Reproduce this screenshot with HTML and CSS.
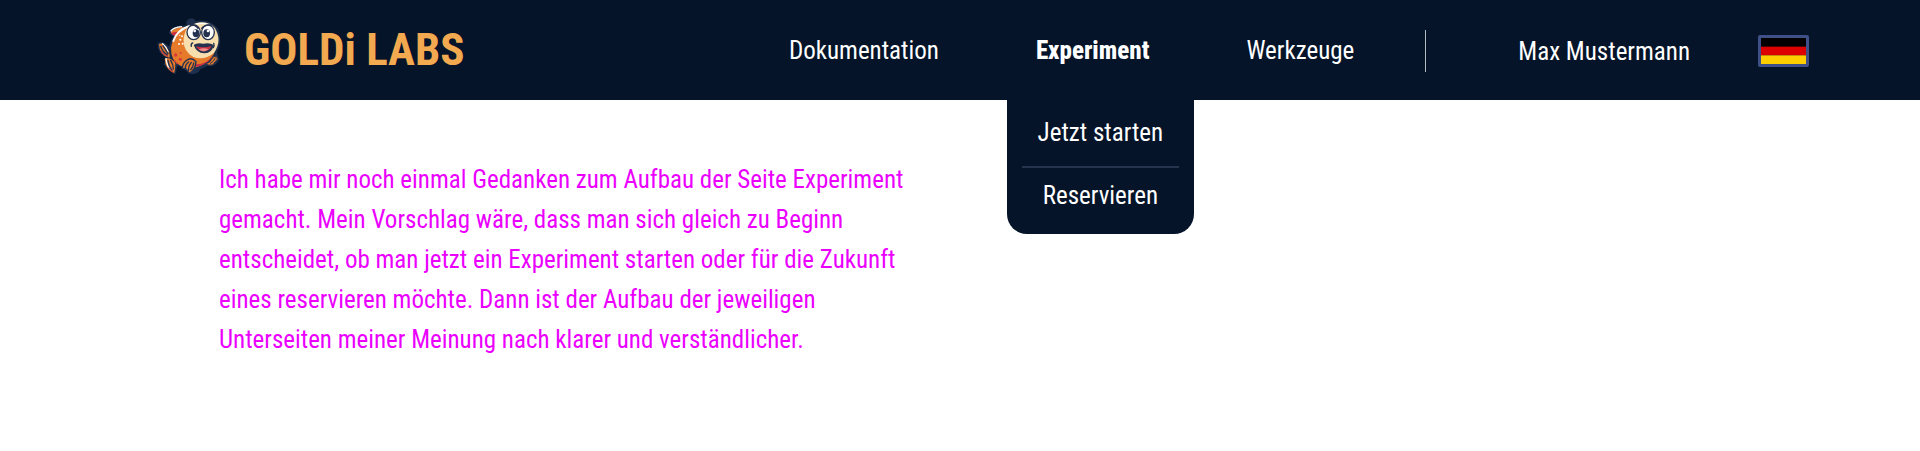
FILE: index.html
```html
<!DOCTYPE html>
<html lang="de">
<head>
<meta charset="utf-8">
<meta name="viewport" content="width=device-width, initial-scale=1">
<title>GOLDi LABS</title>
<link rel="stylesheet" href="styles.css">
</head>
<body>
<header class="header">
  <a class="brand" href="#">
    <svg class="brand-logo" viewBox="18 18 192 171" aria-hidden="true">
      <path fill="#1d2f4c" stroke="#1d2f4c" stroke-width="6" stroke-linejoin="round" d="M112 32Q118 22 130 26L136 34Q178 24 202 56Q214 92 198 124L204 146Q194 166 176 160L150 172Q138 192 118 184L96 166L80 160L74 186L44 160L58 140Q24 128 26 98Q38 90 60 114Q60 94 74 76L60 66Q68 46 112 46Z"/>
      <path fill="#e67a2b" d="M62 64Q70 50 102 48L92 62L80 74Q68 74 62 64Z"/>
      <path fill="#c72f45" d="M63 66Q74 62 90 64L80 75Q68 75 63 66Z"/>
      <path fill="none" stroke="#fff" stroke-width="4" d="M62 61Q70 49 96 47"/>
      <path fill="#e67a2b" d="M27 99Q40 92 54 116Q62 132 58 140Q28 134 27 99Z"/>
      <path fill="#e67a2b" d="M44 144Q60 136 76 156Q76 176 72 186Q46 176 44 144Z"/>
      <path fill="none" stroke="#fff" stroke-width="4" stroke-linecap="round" d="M38 98Q50 108 54 122M48 142Q50 162 60 174"/>
      <path fill="none" stroke="#24324f" stroke-width="4" stroke-linecap="round" d="M32 106Q38 124 52 132M39 104Q46 116 54 128M54 148Q56 166 66 178M62 148Q70 160 70 174"/>
      <path fill="none" stroke="#c72f45" stroke-width="3" d="M32 118Q40 132 54 136M56 170Q62 180 70 184"/>
      <path fill="#e67a2b" d="M128 42Q74 48 63 110Q62 152 92 164Q132 182 176 150L192 128Z"/>
      <path fill="#c72f45" d="M134 168Q176 164 192 130Q172 160 138 160Z"/>
      <path fill="none" stroke="#fff" stroke-width="6" stroke-linecap="round" d="M118 45Q80 58 70 90"/>
      <path fill="#f9dfae" d="M118 46Q160 20 194 50Q218 88 192 126Q162 150 130 138Q98 120 101 82Q104 56 118 46Z"/>
      <path fill="none" stroke="#fff" stroke-width="4" d="M138 39Q160 34 180 42"/>
      <g fill="#fff" stroke="#24324f" stroke-width="4">
        <ellipse cx="131" cy="64" rx="20" ry="22"/>
        <ellipse cx="174" cy="64" rx="19" ry="22"/>
      </g>
      <g fill="#24324f">
        <ellipse cx="138" cy="67" rx="10" ry="12"/>
        <ellipse cx="170" cy="67" rx="10" ry="12"/>
      </g>
      <g fill="#fff">
        <circle cx="134" cy="60" r="4"/>
        <circle cx="174" cy="60" r="4"/>
        <circle cx="91" cy="86" r="3"/>
        <circle cx="98" cy="98" r="3"/>
        <circle cx="87" cy="99" r="3"/>
        <circle cx="96" cy="76" r="3"/>
        <circle cx="89" cy="73" r="2"/>
      </g>
      <path fill="none" stroke="#24324f" stroke-width="4" stroke-linecap="round" d="M117 41Q134 38 144 52M155 52Q164 40 186 42M128 96Q122 98 124 106M191 97Q194 104 190 110"/>
      <path fill="#24324f" d="M131 102Q140 94 160 98Q180 94 191 102Q186 128 162 127Q140 126 131 102Z"/>
      <path fill="#c72f45" d="M138 106Q160 112 184 105Q180 120 162 121Q144 120 138 106Z"/>
      <path fill="#ef8b87" d="M146 116Q160 108 176 115Q168 122 158 121Z"/>
      <g fill="#d93a3e">
        <circle cx="91" cy="145" r="5"/>
        <circle cx="77" cy="132" r="5"/>
        <circle cx="92" cy="126" r="3"/>
        <circle cx="74" cy="150" r="3"/>
        <circle cx="82" cy="157" r="3"/>
      </g>
      <path fill="#e67a2b" stroke="#24324f" stroke-width="4" stroke-linejoin="round" d="M113 146Q98 154 97 172L108 174L118 186Q136 178 138 152Q126 138 113 146Z"/>
      <path fill="none" stroke="#24324f" stroke-width="4" stroke-linecap="round" d="M116 153Q106 160 106 172M124 154Q114 166 116 178M131 156Q130 168 122 176"/>
      <path fill="#e67a2b" stroke="#24324f" stroke-width="3" d="M184 146Q190 132 200 136Q206 146 196 152L188 162Q174 164 166 158Q180 156 184 146Z"/>
      <path fill="none" stroke="#24324f" stroke-width="3" d="M196 140Q192 152 180 158"/>
    </svg>
    <span class="brand-name">GOLDi LABS</span>
  </a>
  <nav class="nav" aria-label="Hauptnavigation">
    <a class="nav-link" href="#">Dokumentation</a>
    <div class="nav-group">
      <a class="nav-link nav-link-active" href="#" aria-current="page">Experiment</a>
      <div class="submenu">
        <a class="submenu-link" href="#">Jetzt starten</a>
        <a class="submenu-link" href="#">Reservieren</a>
      </div>
    </div>
    <a class="nav-link" href="#">Werkzeuge</a>
  </nav>
  <div class="account">
    <a class="nav-link" href="#">Max Mustermann</a>
    <button class="language" type="button" aria-label="Deutsch">
      <svg class="flag" viewBox="0 0 45 27" preserveAspectRatio="none" aria-hidden="true">
        <rect width="45" height="9" fill="#000"/>
        <rect y="9" width="45" height="9" fill="#d00"/>
        <rect y="18" width="45" height="9" fill="#ffce00"/>
      </svg>
    </button>
  </div>
</header>
<main class="content">
  <p class="note">Ich habe mir noch einmal Gedanken zum Aufbau der Seite Experiment gemacht. Mein Vorschlag wäre, dass man sich gleich zu Beginn entscheidet, ob man jetzt ein Experiment starten oder für die Zukunft eines reservieren möchte. Dann ist der Aufbau der jeweiligen Unterseiten meiner Meinung nach klarer und verständlicher.</p>
</main>
</body>
</html>
```
FILE: styles.css
```css
* {
  box-sizing: border-box;
}

body {
  margin: 0;
  background: #fff;
  font-family: "Roboto Condensed", Roboto, sans-serif;
  font-size: 25px;
  line-height: 40px;
}

a {
  color: inherit;
  text-decoration: none;
}

.header {
  display: flex;
  align-items: center;
  min-height: 100px;
  padding: 0 111px 0 156px;
  background: #051429;
  color: #fff;
}

.brand {
  display: flex;
  align-items: center;
  gap: 24px;
  margin-right: auto;
  color: #f2a950;
  font-size: 45px;
  font-weight: 700;
}

.brand-logo {
  width: 64px;
  height: 57px;
  margin-bottom: 10px;
}

.nav {
  display: flex;
  gap: 97px;
  padding: 2px 71px 0 0;
}

.nav-group {
  position: relative;
}

.nav-link-active {
  font-weight: 800;
}

.submenu {
  position: absolute;
  top: 69px;
  left: -29px;
  display: flex;
  flex-direction: column;
  width: 187px;
  padding: 5px 15px 10px;
  border-radius: 0 0 20px 20px;
  background: #051429;
  text-align: center;
}

.submenu-link {
  padding: 8px 0;
}

.submenu-link:first-child {
  padding-bottom: 13px;
}

.submenu-link + .submenu-link {
  border-top: 2px solid #27344d;
}

.account {
  display: flex;
  align-items: center;
  gap: 68px;
  padding: 4px 0 0 93px;
  background: linear-gradient(#b4b9c0, #b4b9c0) left bottom / 1px 42px no-repeat;
}

.language {
  display: flex;
  width: 51px;
  height: 32px;
  margin-bottom: 3px;
  padding: 0;
  border: 3px solid #3f5088;
  border-radius: 2px;
  background: none;
}

.flag {
  width: 100%;
  height: 100%;
}

.content {
  padding: 60px 219px;
}

.note {
  max-width: 700px;
  margin: 0;
  color: #eb00ff;
}
```
